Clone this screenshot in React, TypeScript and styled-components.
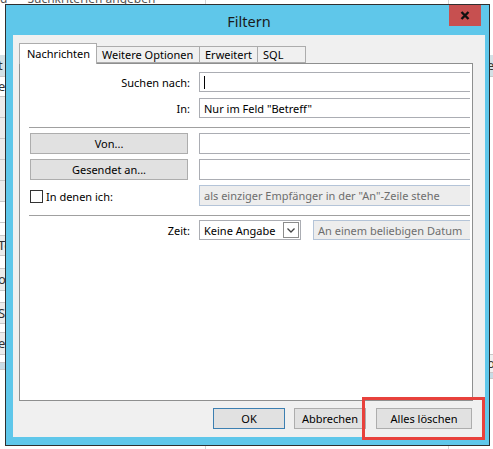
import React from 'react';
import styled, { createGlobalStyle } from 'styled-components';

const GlobalStyle = createGlobalStyle`
  html, body {
    margin: 0;
    padding: 0;
    background: #fff;
  }
  body {
    font-family: "Noto Sans", "Liberation Sans", sans-serif;
    font-size: 11px;
    color: #000;
  }
`;

const Screen = styled.div`
  position: relative;
  width: 493px;
  height: 449px;
  overflow: hidden;
  background: #fff;
`;

/* ---------- outlook window behind the dialog ---------- */

const Backdrop = styled.div`
  position: absolute;
  inset: 0;
  display: flex;
  justify-content: space-between;
  padding-top: 55px;
`;

const GridLine = styled.div<{ $x: number }>`
  position: absolute;
  top: 0;
  bottom: 0;
  left: ${(p) => p.$x}px;
  width: 1px;
  background: #d4d4d4;
`;

const TopText = styled.div`
  position: absolute;
  top: -10px;
  left: 0;
  right: 0;
  display: flex;
  gap: 20px;
  font-size: 12px;
  color: #555;
  white-space: nowrap;
`;

const Strip = styled.div<{ $w: number }>`
  width: ${(p) => p.$w}px;
  overflow: hidden;
  display: flex;
  flex-direction: column;
`;

const StripCell = styled.div<{ $h: number; $bg: string }>`
  height: ${(p) => p.$h}px;
  flex: none;
  box-sizing: border-box;
  background: ${(p) => p.$bg};
  border-bottom: 1px solid #c9c9c9;
  font-size: 13px;
  line-height: ${(p) => p.$h - 1}px;
  color: #333;
  white-space: nowrap;
  text-indent: -2px;
`;

/* ---------- dialog frame ---------- */

const Dialog = styled.div`
  position: absolute;
  left: 5px;
  top: 4px;
  width: 485px;
  height: 442px;
  box-sizing: border-box;
  border: 1px solid #2f2f2f;
  background: #5fc7ea;
  display: flex;
  flex-direction: column;
  padding: 0 4px 8px 7px;
`;

const TitleBar = styled.div`
  height: 30px;
  flex: none;
  display: grid;
  grid-template-columns: 1fr auto 1fr;
  align-items: center;
`;

const Title = styled.div`
  grid-column: 2;
  font-size: 14.5px;
  color: #1b1b1b;
  padding-top: 1px;
`;

const CloseButton = styled.div`
  grid-column: 3;
  justify-self: end;
  align-self: start;
  margin-right: 4px;
  width: 32px;
  height: 21px;
  background: #c75050;
  display: flex;
  align-items: center;
  justify-content: center;
`;

const Client = styled.div`
  flex: 1;
  background: #f0f0f0;
  display: flex;
  flex-direction: column;
  padding: 8px 12px 8px 6px;
`;

/* ---------- tabs ---------- */

const TabStrip = styled.div`
  display: flex;
  align-items: flex-end;
  height: 20px;
  flex: none;
  position: relative;
  z-index: 1;
`;

const Tab = styled.div<{ $w: number; $active?: boolean }>`
  width: ${(p) => p.$w}px;
  box-sizing: border-box;
  height: ${(p) => (p.$active ? 21 : 17)}px;
  margin-bottom: ${(p) => (p.$active ? -1 : 0)}px;
  background: ${(p) => (p.$active ? '#fff' : '#f0f0f0')};
  border: 1px solid #acacac;
  border-bottom: ${(p) => (p.$active ? 'none' : '1px solid #acacac')};
  margin-left: ${(p) => (p.$active ? 0 : -1)}px;
  padding-left: ${(p) => (p.$active ? 7 : 5)}px;
  line-height: ${(p) => (p.$active ? 20 : 15)}px;
  white-space: nowrap;
  &:first-child {
    margin-left: 0;
  }
`;

const Panel = styled.div`
  flex: 1;
  background: #fff;
  border: 1px solid #8e8f8f;
  padding: 8px 2px 0 10px;
  display: flex;
  flex-direction: column;
`;

const Row = styled.div<{ $mt?: number; $h?: number }>`
  display: grid;
  grid-template-columns: 158px 1fr;
  column-gap: 11px;
  height: ${(p) => p.$h ?? 20}px;
  margin-top: ${(p) => p.$mt ?? 0}px;
  align-items: stretch;
`;

const Label = styled.div`
  display: flex;
  align-items: center;
  justify-content: flex-end;
  margin-right: -2px;
  white-space: nowrap;
`;

const Separator = styled.div<{ $mt: number }>`
  height: 1px;
  margin-top: ${(p) => p.$mt}px;
  margin-left: -1px;
  background: #a0a0a0;
`;

const Field = styled.div`
  box-sizing: border-box;
  border: 1px solid #abadb3;
  border-right: none;
  background: #fff;
  display: flex;
  align-items: center;
  padding-left: 4px;
  white-space: nowrap;
  overflow: hidden;
`;

const Caret = styled.span`
  width: 1px;
  height: 13px;
  background: #000;
`;

const DisabledField = styled.div`
  flex: 1;
  box-sizing: border-box;
  border: 1px solid #b4c4d8;
  border-right: none;
  background: #ededed;
  color: #6d6d6d;
  display: flex;
  align-items: center;
  padding-left: 4px;
  white-space: nowrap;
  overflow: hidden;
`;

const Button = styled.div<{ $w: number; $default?: boolean }>`
  width: ${(p) => p.$w}px;
  height: 21px;
  box-sizing: border-box;
  border: 1px solid ${(p) => (p.$default ? '#3c7fb1' : '#adadad')};
  background: #e1e1e1;
  display: flex;
  align-items: center;
  justify-content: center;
  white-space: nowrap;
`;

const CheckLabel = styled.div`
  display: flex;
  align-items: center;
  gap: 3px;
  padding-top: 2px;
`;

const CheckBox = styled.span`
  width: 13px;
  height: 13px;
  box-sizing: border-box;
  border: 1px solid #333;
  background: #fff;
`;

const TimeFields = styled.div`
  display: flex;
  gap: 12px;
`;

const Select = styled.div`
  width: 102px;
  box-sizing: border-box;
  border: 1px solid #abadb3;
  background: #fff;
  display: flex;
  align-items: center;
  justify-content: space-between;
  padding: 0 1px 0 4px;
`;

const SelectArrow = styled.span`
  width: 16px;
  height: 16px;
  box-sizing: border-box;
  border: 1px solid #8c8c8c;
  display: flex;
  align-items: center;
  justify-content: center;
`;

/* ---------- footer ---------- */

const Footer = styled.div`
  display: flex;
  justify-content: flex-end;
  gap: 9px;
  margin-top: 7px;
  padding-right: 1px;
  flex: none;
`;

const Highlight = styled.div`
  position: relative;
  margin-left: 1px;
  &::after {
    content: '';
    position: absolute;
    left: -14px;
    right: -13px;
    top: -11px;
    bottom: -11px;
    border: 3px solid #e8413c;
    box-sizing: border-box;
  }
`;

const leftCells = [
  { h: 22, bg: '#d3e1e6', t: 't' },
  { h: 20, bg: '#fff', t: 'e' },
  { h: 21, bg: '#ececec', t: '' },
  { h: 21, bg: '#ececec', t: '' },
  { h: 21, bg: '#ececec', t: '' },
  { h: 21, bg: '#ececec', t: '' },
  { h: 21, bg: '#ececec', t: '' },
  { h: 21, bg: '#fff', t: '' },
  { h: 13, bg: '#fff', t: '' },
  { h: 20, bg: '#ececec', t: 'Te' },
  { h: 13, bg: '#fff', t: '' },
  { h: 22, bg: '#ececec', t: 'o' },
  { h: 12, bg: '#fff', t: '' },
  { h: 21, bg: '#ececec', t: 'Sp' },
  { h: 9, bg: '#fff', t: '' },
  { h: 22, bg: '#ececec', t: 'e' },
  { h: 8, bg: '#fff', t: '' },
  { h: 7, bg: '#c8dce5', t: '' },
];

const rightCells = [
  { h: 22, bg: '#d3e1e6', t: 'e' },
  { h: 278, bg: '#fff', t: '' },
  { h: 18, bg: '#f0f0f0', t: 'o' },
  { h: 6, bg: '#c8dce5', t: '' },
];

const CloseGlyph = () => (
  <svg width="10" height="9" viewBox="0 0 10 9">
    <path d="M1.5 1 L8.5 8 M8.5 1 L1.5 8" stroke="#111" strokeWidth="2.4" fill="none" />
  </svg>
);

const Chevron = () => (
  <svg width="8" height="5" viewBox="0 0 8 5">
    <path d="M0.5 0.5 L4 4 L7.5 0.5" stroke="#444" strokeWidth="1.3" fill="none" />
  </svg>
);

export default function App() {
  return (
    <>
      <GlobalStyle />
      <Screen>
        <Backdrop>
          <TopText>
            <span>d</span>
            <span>Suchkriterien angeben</span>
          </TopText>
          <GridLine $x={205} />
          <GridLine $x={448} />
          <Strip $w={5}>
            {leftCells.map((c, i) => (
              <StripCell key={i} $h={c.h} $bg={c.bg}>
                {c.t}
              </StripCell>
            ))}
          </Strip>
          <Strip $w={4}>
            {rightCells.map((c, i) => (
              <StripCell key={i} $h={c.h} $bg={c.bg}>
                {c.t}
              </StripCell>
            ))}
          </Strip>
        </Backdrop>

        <Dialog>
          <TitleBar>
            <Title>Filtern</Title>
            <CloseButton>
              <CloseGlyph />
            </CloseButton>
          </TitleBar>

          <Client>
            <TabStrip>
              <Tab $w={78} $active>Nachrichten</Tab>
              <Tab $w={104}>Weitere Optionen</Tab>
              <Tab $w={59}>Erweitert</Tab>
              <Tab $w={49}>SQL</Tab>
            </TabStrip>

            <Panel>
              <Row>
                <Label>Suchen nach:</Label>
                <Field>
                  <Caret />
                </Field>
              </Row>
              <Row $mt={6}>
                <Label>In:</Label>
                <Field>Nur im Feld "Betreff"</Field>
              </Row>

              <Separator $mt={9} />

              <Row $mt={5}>
                <Button $w={158}>Von...</Button>
                <Field />
              </Row>
              <Row $mt={6}>
                <Button $w={158}>Gesendet an...</Button>
                <Field />
              </Row>
              <Row $mt={6} $h={21}>
                <CheckLabel>
                  <CheckBox />
                  In denen ich:
                </CheckLabel>
                <DisabledField>als einziger Empfänger in der "An"-Zeile stehe</DisabledField>
              </Row>

              <Separator $mt={9} />

              <Row $mt={4}>
                <Label>Zeit:</Label>
                <TimeFields>
                  <Select>
                    Keine Angabe
                    <SelectArrow>
                      <Chevron />
                    </SelectArrow>
                  </Select>
                  <DisabledField>An einem beliebigen Datum</DisabledField>
                </TimeFields>
              </Row>
            </Panel>

            <Footer>
              <Button $w={72} $default>OK</Button>
              <Button $w={72}>Abbrechen</Button>
              <Highlight>
                <Button $w={96}>Alles löschen</Button>
              </Highlight>
            </Footer>
          </Client>
        </Dialog>
      </Screen>
    </>
  );
}
